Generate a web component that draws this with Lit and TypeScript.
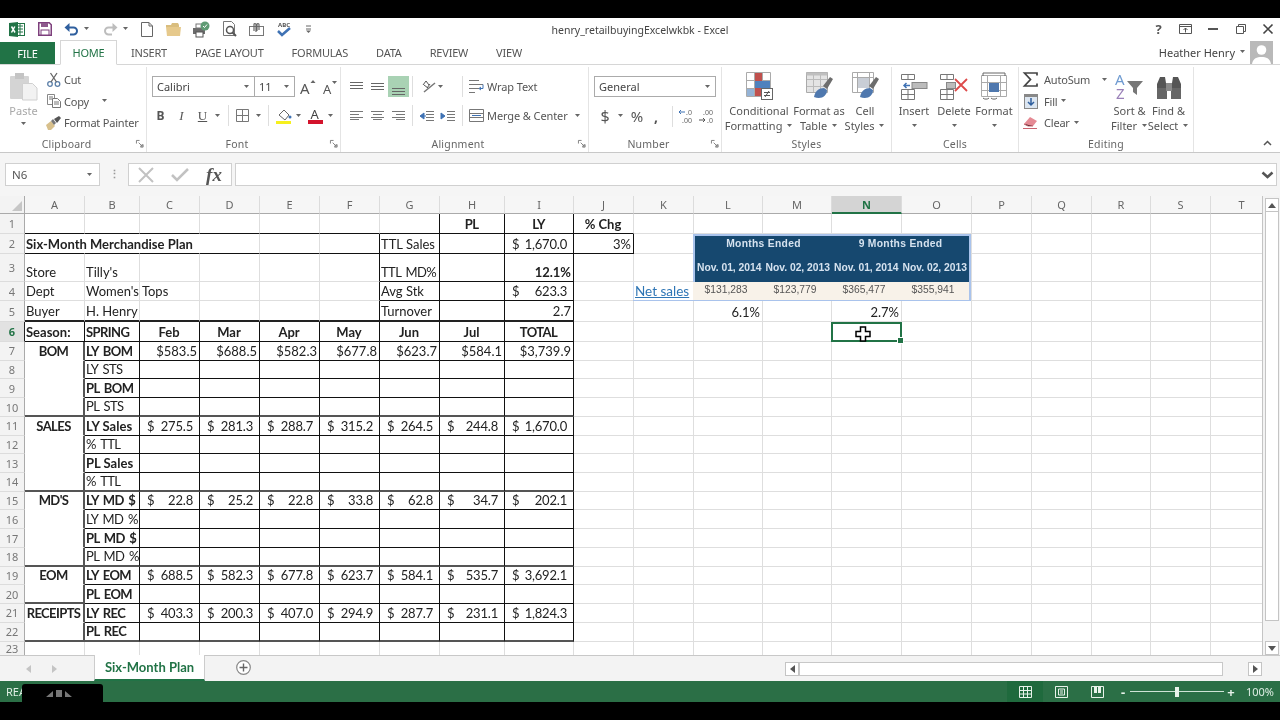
import { LitElement, html, css, nothing } from "lit";
import { customElement } from "lit/decorators.js";

const COLS = "ABCDEFGHIJKLMNOPQRST".split("");

type Cell = { t?: string; money?: string; bold?: boolean; al?: "c" | "r"; sel?: boolean };
const cells: Record<string, Cell> = {
  H1: { t: "PL", bold: true, al: "c" },
  I1: { t: "LY", bold: true, al: "c" },
  J1: { t: "% Chg", bold: true, al: "c" },
  A2: { t: "Six-Month Merchandise Plan", bold: true },
  G2: { t: "TTL Sales" },
  I2: { money: "1,670.0" },
  J2: { t: "3%", al: "r" },
  A3: { t: "Store" },
  B3: { t: "Tilly's" },
  G3: { t: "TTL MD%" },
  I3: { t: "12.1%", bold: true, al: "r" },
  A4: { t: "Dept" },
  B4: { t: "Women's Tops" },
  G4: { t: "Avg Stk" },
  I4: { money: "623.3" },
  A5: { t: "Buyer" },
  B5: { t: "H. Henry" },
  G5: { t: "Turnover" },
  I5: { t: "2.7", al: "r" },
  L5: { t: "6.1%", al: "r" },
  N5: { t: "2.7%", al: "r" },
  A6: { t: "Season:", bold: true },
  B6: { t: "SPRING", bold: true },
};
["Feb", "Mar", "Apr", "May", "Jun", "Jul", "TOTAL"].forEach((m, i) => {
  cells[COLS[i + 2] + "6"] = { t: m, bold: true, al: "c" };
});
["$583.5", "$688.5", "$582.3", "$677.8", "$623.7", "$584.1", "$3,739.9"].forEach((v, i) => {
  cells[COLS[i + 2] + "7"] = { t: v, al: "r" };
});
const sideLabels: [number, string][] = [[7, "BOM"], [11, "SALES"], [15, "MD'S"], [19, "EOM"], [21, "RECEIPTS"]];
sideLabels.forEach(([r, t]) => (cells["A" + r] = { t, bold: true, al: "c" }));
const rowLabels: [number, string, boolean][] = [
  [7, "LY BOM", true], [8, "LY STS", false], [9, "PL BOM", true], [10, "PL STS", false],
  [11, "LY Sales", true], [12, "% TTL", false], [13, "PL Sales", true], [14, "% TTL", false],
  [15, "LY MD $", true], [16, "LY MD %", false], [17, "PL MD $", true], [18, "PL MD %", false],
  [19, "LY EOM", true], [20, "PL EOM", true], [21, "LY REC", true], [22, "PL REC", true],
];
rowLabels.forEach(([r, t, bold]) => (cells["B" + r] = { t, bold }));
const moneyRows: [number, string[]][] = [
  [11, ["275.5", "281.3", "288.7", "315.2", "264.5", "244.8", "1,670.0"]],
  [15, ["22.8", "25.2", "22.8", "33.8", "62.8", "34.7", "202.1"]],
  [19, ["688.5", "582.3", "677.8", "623.7", "584.1", "535.7", "3,692.1"]],
  [21, ["403.3", "200.3", "407.0", "294.9", "287.7", "231.1", "1,824.3"]],
];
moneyRows.forEach(([r, vals]) => vals.forEach((v, i) => (cells[COLS[i + 2] + r] = { money: v })));

// which cell edges carry the dark table rules
function bottomClass(r: number, c: number) {
  if (r === 1 || r === 2) return c <= 9 ? "bb" : "";
  if (r === 3 || r === 4) return c >= 6 && c <= 8 ? "bb" : "";
  if (r === 5) return c <= 8 ? "bb2" : "";
  if (r === 6) return c <= 8 ? "bb" : "";
  if (r >= 7 && r <= 22 && c <= 8) {
    const gray = r === 10 || r === 14 || r === 18 || r === 22;
    if (c === 0) return gray || r === 20 ? "bg2" : "none";
    return gray ? "bg2" : "bb";
  }
  return "";
}
function rightClass(r: number, c: number) {
  if (r === 1) return c >= 6 && c <= 8 ? "rr" : "";
  if (r === 2) {
    if (c <= 2) return "noR";
    return c >= 5 && c <= 9 ? "rr" : "";
  }
  if (r >= 3 && r <= 5) return c >= 5 && c <= 8 ? "rr" : "";
  if (r === 6) return c <= 8 ? "rr" : "";
  if (r >= 7 && r <= 22) {
    if (c === 0) return "rg2";
    return c <= 8 ? "rr" : "";
  }
  return "";
}

const dd = html`<svg class="dd" width="7" height="4" viewBox="0 0 7 4"><path d="M1 0h5L3.500 3z" fill="#666"/></svg>`;
const launcher = html`<svg width="8" height="8" viewBox="0 0 9 9"><path d="M.5 4V.5H4M8 5v3H5M3 3l4 4M7 4.500V7H4.500" fill="none" stroke="#777"/></svg>`;

const I = {
  excel: html`<svg width="16" height="15" viewBox="0 0 16 15"><rect x="6" y="1.500" width="9.500" height="12" fill="#fff" stroke="#217346"/><path d="M9 4h5M9 7h5M9 10h5M11 2v11" stroke="#217346"/><path d="M0 1l9-1v15l-9-1z" fill="#217346"/><path d="M2.500 4.500l3.500 6M5.800 4.500l-3.300 6" stroke="#fff" stroke-width="1.500"/></svg>`,
  save: html`<svg width="14" height="14" viewBox="0 0 14 14"><path d="M.75.75h10.500l2 2v10.500H.75z" fill="none" stroke="#7d3f7c" stroke-width="1.500"/><rect x="3" y="1" width="7" height="4" fill="#8d5a8c"/><rect x="3" y="8" width="8" height="5" fill="#fff" stroke="#7d3f7c"/></svg>`,
  undo: html`<svg width="15" height="14" viewBox="0 0 15 14"><path d="M2 5.500h7.500a3.500 3.500 0 0 1 0 7H6" fill="none" stroke="#2f5f9e" stroke-width="2"/><path d="M5.500 1v9L.5 5.500z" fill="#2f5f9e"/></svg>`,
  redo: html`<svg width="15" height="14" viewBox="0 0 15 14"><path d="M13 5.500H5.500a3.500 3.500 0 0 0 0 7H9" fill="none" stroke="#bdbdbd" stroke-width="2"/><path d="M9.500 1v9l5-4.500z" fill="#bdbdbd"/></svg>`,
  page: html`<svg width="12" height="15" viewBox="0 0 12 15"><path d="M.5.500h7.500l3.500 3.500v10.500H.5zM8 .5v3.500h3.500" fill="#fff" stroke="#666"/></svg>`,
  open: html`<svg width="15" height="13" viewBox="0 0 15 13"><path d="M0 2h5l1-2h6l1 2v2H0z" fill="#d9bd7e"/><path d="M0 4h15l-1 9H1z" fill="#e6c98c"/></svg>`,
  share: html`<svg width="17" height="16" viewBox="0 0 17 16"><rect x="0" y="7" width="12" height="6" fill="#6b6b6b"/><rect x="3" y="11" width="7" height="5" fill="#fff" stroke="#555"/><rect x="3" y="3" width="7" height="4" fill="#fff" stroke="#777"/><circle cx="12" cy="5" r="4.500" fill="#5f9b74"/><path d="M10 5l1.500 1.500L14 3.500" fill="none" stroke="#fff"/></svg>`,
  preview: html`<svg width="14" height="16" viewBox="0 0 14 16"><path d="M.5.500h8l3 3v11H.5z" fill="#fff" stroke="#777"/><circle cx="7" cy="9" r="3.500" fill="#fff" stroke="#555" stroke-width="1.500"/><path d="M9.500 11.500l3.500 3.500" stroke="#555" stroke-width="2"/></svg>`,
  attach: html`<svg width="15" height="13" viewBox="0 0 15 13"><rect x=".5" y="3.500" width="14" height="9" fill="#fff" stroke="#777"/><path d="M5 8V1.500a1 1 0 0 1 2 0V9M8 8V1.500a1 1 0 0 1 2 0V7" fill="none" stroke="#666" stroke-width="1.200"/></svg>`,
  spell: html`<svg width="16" height="18" viewBox="0 0 16 18"><text x="1" y="7" font-family="Noto Sans" font-size="6" font-weight="700" fill="#555">ABC</text><path d="M1 11l4 4 8-7" fill="none" stroke="#3f72b4" stroke-width="2.500"/></svg>`,
  cust: html`<svg width="7" height="8" viewBox="0 0 7 8"><path d="M1 1h5M1 4h5" stroke="#666"/><path d="M1 5.500h5L3.500 8z" fill="#666"/></svg>`,
  avatar: html`<svg width="23" height="23" viewBox="0 0 23 23"><rect width="23" height="23" fill="#b9b9b9"/><circle cx="11.500" cy="9" r="4.800" fill="#fff"/><path d="M2 23c1-6 5-7 9.500-7s8.500 1 9.500 7z" fill="#fff"/></svg>`,
  paste: html`<svg width="28" height="28" viewBox="0 0 28 28"><rect x="0" y="3" width="19" height="23" rx="1" fill="#d4d4d4"/><rect x="5" y="0" width="9" height="6" fill="#c4c4c4"/><path d="M12.500 10.500h10l4.500 4.500v12H12.500z" fill="#f2f2f2" stroke="#d0d0d0"/></svg>`,
  cut: html`<svg width="14" height="14" viewBox="0 0 14 14"><circle cx="3" cy="11" r="2.300" fill="none" stroke="#5b7fa8" stroke-width="1.300"/><circle cx="10.500" cy="11" r="2.300" fill="none" stroke="#5b7fa8" stroke-width="1.300"/><path d="M4 9L10 0M9.500 9L3.500 0" stroke="#666" stroke-width="1.300"/></svg>`,
  copy: html`<svg width="14" height="14" viewBox="0 0 14 14"><path d="M.5.500h7v10h-7z" fill="#fff" stroke="#888"/><path d="M5.500 4.500h5l3 3v6h-8z" fill="#fff" stroke="#777"/><path d="M2 3h4M2 5h3M7 8h5M7 10h5" stroke="#777"/></svg>`,
  painter: html`<svg width="15" height="14" viewBox="0 0 15 14"><path d="M0 9l5-4 4 5-4 4H2z" fill="#d8c08c"/><path d="M5 5l2-2 3 4-2 2z" fill="#777"/><path d="M8 3l5-3 2 2-4 5z" fill="#555"/></svg>`,
  growA: html`<svg width="16" height="18" viewBox="0 0 16 18"><text x="0" y="16" font-family="Noto Sans" font-size="15" fill="#555">A</text><path d="M10.500 5l2.500-3 2.500 3z" fill="#666"/></svg>`,
  shrinkA: html`<svg width="15" height="16" viewBox="0 0 15 16"><text x="0" y="15" font-family="Noto Sans" font-size="13" fill="#555">A</text><path d="M9 2h5l-2.500 3z" fill="#666"/></svg>`,
  borders: html`<svg width="13" height="13" viewBox="0 0 13 13"><path d="M.5.500h12v12H.5zM6.500 1v11M1 6.500h11" fill="none" stroke="#777"/></svg>`,
  fill: html`<svg width="16" height="16" viewBox="0 0 16 16"><path d="M3 7l5-5 5 5-4 5z" fill="#fff" stroke="#666"/><circle cx="14" cy="9" r="1.500" fill="#3f72b4"/><rect x="0" y="13" width="15" height="3" fill="#f6f01e"/></svg>`,
  colorA: html`<svg width="15" height="17" viewBox="0 0 15 17"><text x="2.500" y="12" font-family="Noto Sans" font-size="13" fill="#444">A</text><rect y="13" width="15" height="4" fill="#d3132c"/></svg>`,
  alTop: html`<svg width="13" height="9" viewBox="0 0 13 9"><path d="M0 .5h13M0 3.500h13M0 6.500h13" stroke="#666"/></svg>`,
  alMid: html`<svg width="13" height="7" viewBox="0 0 13 7"><path d="M0 .5h13M0 3.500h13M0 6.500h13" stroke="#666"/></svg>`,
  alBot: html`<svg width="13" height="16" viewBox="0 0 13 16"><path d="M0 9.500h13M0 12.500h13M0 15.500h13" stroke="#666"/></svg>`,
  left: html`<svg width="13" height="9" viewBox="0 0 13 9"><path d="M0 .5h13M0 3.500h9M0 6.500h13M0 8.500h9" stroke="#777"/></svg>`,
  center: html`<svg width="13" height="9" viewBox="0 0 13 9"><path d="M0 .5h13M2 3.500h9M0 6.500h13M2 8.500h9" stroke="#777"/></svg>`,
  right: html`<svg width="13" height="9" viewBox="0 0 13 9"><path d="M0 .5h13M4 3.500h9M0 6.500h13M4 8.500h9" stroke="#777"/></svg>`,
  orient: html`<svg width="14" height="13" viewBox="0 0 14 13"><path d="M2 12L13 3" stroke="#777" stroke-width="1.500"/><path d="M1 5l3-4 3 4M2 5l4 3M5 8l3-4" fill="none" stroke="#555"/></svg>`,
  outdent: html`<svg width="14" height="10" viewBox="0 0 14 10"><path d="M6 .5h8M6 3.500h8M6 6.500h8M6 9.500h8" stroke="#777"/><path d="M4 2L0 5l4 3zM4 5h2" fill="#3f72b4" stroke="#3f72b4"/></svg>`,
  indent: html`<svg width="14" height="10" viewBox="0 0 14 10"><path d="M6 .5h8M6 3.500h8M6 6.500h8M6 9.500h8" stroke="#777"/><path d="M0 2l4 3-4 3zM0 5h2" fill="#3f72b4" stroke="#3f72b4"/></svg>`,
  wrap: html`<svg width="15" height="13" viewBox="0 0 15 13"><path d="M0 .5h10M0 4.500h14M0 8.500h10M0 12.500h6" stroke="#777"/><path d="M14 4.500v4h-3M12 7l-2 1.500 2 1.500" fill="none" stroke="#3f72b4"/></svg>`,
  merge: html`<svg width="15" height="13" viewBox="0 0 15 13"><path d="M.5.500h14v12H.5zM1 4.500h13M1 8.500h13" fill="none" stroke="#777"/><path d="M3 6.500h9" stroke="#3f72b4"/></svg>`,
  decUp: html`<svg width="17" height="18" viewBox="0 0 17 18"><text x="7" y="8" font-family="Noto Sans" font-size="7" fill="#666">.0</text><text x="3" y="15.500" font-family="Noto Sans" font-size="7" fill="#666">.00</text><path d="M0 5h6M2 3L0 5l2 2" fill="none" stroke="#3f72b4"/></svg>`,
  decDn: html`<svg width="17" height="18" viewBox="0 0 17 18"><text x="5" y="8" font-family="Noto Sans" font-size="7" fill="#666">.00</text><text x="9" y="15.500" font-family="Noto Sans" font-size="7" fill="#666">.0</text><path d="M1 13h6M5 11l2 2-2 2" fill="none" stroke="#555"/></svg>`,
  cond: html`<svg width="27" height="28" viewBox="0 0 27 28"><path d="M.5.500h24v24H.5zM8.500 1v23M16.500 1v23M1 8.500h23M1 16.500h23" fill="#fff" stroke="#aaa"/><rect x="9" y="1" width="7" height="8" fill="#c0504d"/><rect x="9" y="9" width="15" height="7" fill="#4f81bd"/><rect x="9" y="16" width="7" height="8" fill="#c0504d"/><rect x="1" y="17" width="7" height="7" fill="#94b3d6"/><rect x="15.500" y="16.500" width="11" height="11" fill="#fff" stroke="#666"/><path d="M18 20.500h6M18 23.500h6M19 25l4-6" stroke="#555"/></svg>`,
  table: html`<svg width="27" height="28" viewBox="0 0 27 28"><path d="M.5.500h21v20H.5z" fill="#e4e4e4" stroke="#aaa"/><path d="M7.500 1v19M14.500 1v19M1 7.500h20M1 14.500h20" stroke="#bbb"/><path d="M.5.500h21v3H.5z" fill="#bfbfbf"/><path d="M17 14l7-9 3 2-6 10z" fill="#6d6d6d"/><path d="M8 25c1-6 5-9 10-9l3 2c0 6-6 10-13 7z" fill="#4f78ae"/></svg>`,
  cellst: html`<svg width="27" height="28" viewBox="0 0 27 28"><path d="M.5.500h21v20H.5zM1 5.500h20M5.500 1v19M17.500 1v19" fill="#fff" stroke="#aaa"/><rect x="6" y="6" width="11" height="10" fill="#c9ced6"/><path d="M17 14l7-9 3 2-6 10z" fill="#6d6d6d"/><path d="M8 25c1-6 5-9 10-9l3 2c0 6-6 10-13 7z" fill="#4f78ae"/></svg>`,
  insert: html`<svg width="27" height="26" viewBox="0 0 27 26"><path d="M.5.500h13v5H.5zM7 1v4M.5 15.500h13v10H.5zM1 20.500h12M7 16v9" fill="none" stroke="#777"/><rect x="11" y="8.500" width="15" height="6" fill="#bcbcbc" stroke="#888"/><path d="M9 11.500H3M5.500 9L3 11.500 5.500 14" fill="none" stroke="#3f72b4" stroke-width="1.500"/></svg>`,
  del: html`<svg width="28" height="26" viewBox="0 0 28 26"><path d="M.5.500h13v5H.5zM7 1v4M.5 15.500h13v10H.5zM1 20.500h12M7 16v9" fill="none" stroke="#777"/><rect x="6.500" y="8.500" width="9" height="6" fill="#bcbcbc" stroke="#888"/><path d="M15 5l12 12M27 5L15 17" stroke="#dd4a4a" stroke-width="1.800"/></svg>`,
  format: html`<svg width="27" height="28" viewBox="0 0 27 28"><path d="M.5 3.500h25v21H.5zM6.500 3v21M19.500 3v21M1 10.500h24M1 18.500h24" fill="#fff" stroke="#aaa"/><rect x="8" y="11" width="10" height="9" fill="#4f78ae"/><path d="M2 1h22M2 1v3M24 1v3M2 26c1 1.500 5 1.500 6 0M10 26c1 1.500 5 1.500 6 0" fill="none" stroke="#666"/></svg>`,
  sigma: html`<svg width="15" height="15" viewBox="0 0 15 15"><path d="M14 3.500V1H1.500l6 6.500-6 6.500H14v-2.500" fill="none" stroke="#444" stroke-width="1.700"/></svg>`,
  fillDown: html`<svg width="14" height="15" viewBox="0 0 14 15"><rect x=".5" y=".5" width="13" height="14" fill="#dce6f1" stroke="#888"/><path d="M1 1h12v2H1z" fill="#888"/><path d="M7 4v7M4 8l3 3 3-3" fill="none" stroke="#2f5f9e" stroke-width="1.500"/></svg>`,
  eraser: html`<svg width="15" height="13" viewBox="0 0 15 13"><path d="M7 1l7 4-4 5H5L1 8z" fill="#e58a94"/><path d="M1 8l4 2h5M0 12.500h14" stroke="#c9626e"/></svg>`,
  sort: html`<svg width="29" height="28" viewBox="0 0 29 28"><text x="0" y="13" font-family="Noto Sans" font-size="15" fill="#6f9bd1">A</text><text x="1" y="27" font-family="Noto Sans" font-size="15" fill="#9a80b8">Z</text><path d="M12 9h16l-6 7v7l-4-3v-4z" fill="#777"/></svg>`,
  find: html`<svg width="26" height="24" viewBox="0 0 26 24"><path d="M4 1h5l1 6v6H1V8zM17 1h5l3 7v5h-9V7z" fill="#555"/><rect x="1" y="12" width="10" height="11" fill="#666"/><rect x="15" y="12" width="10" height="11" fill="#666"/><rect x="10" y="7" width="6" height="8" fill="#8a8a8a"/></svg>`,
  chevron: html`<svg width="9" height="6" viewBox="0 0 9 6"><path d="M1 5l3.500-3.500L8 5" fill="none" stroke="#555" stroke-width="1.500"/></svg>`,
  help: html`<span class="helpq">?</span>`,
  display: html`<svg width="13" height="10" viewBox="0 0 13 10"><path d="M.5.500h12v9H.5zM1 2.500h11" fill="none" stroke="#555"/><path d="M6.500 8.500V4M4.500 6l2-2 2 2" fill="none" stroke="#555"/></svg>`,
  min: html`<svg width="10" height="3" viewBox="0 0 10 3"><rect width="10" height="2" fill="#555"/></svg>`,
  restore: html`<svg width="10" height="10" viewBox="0 0 10 10"><path d="M.5 2.500h7v7h-7zM2.500 2V.5h7v7H8" fill="none" stroke="#555"/></svg>`,
  close: html`<svg width="10" height="10" viewBox="0 0 10 10"><path d="M.5.500l9 9M9.500.5l-9 9" stroke="#444" stroke-width="1.600"/></svg>`,
  cancel: html`<svg width="16" height="16" viewBox="0 0 16 16"><path d="M1 1l14 14M15 1L1 15" stroke="#c2c2c2" stroke-width="2"/></svg>`,
  enter: html`<svg width="18" height="14" viewBox="0 0 18 14"><path d="M1 7l5 5L17 1" fill="none" stroke="#c2c2c2" stroke-width="2.500"/></svg>`,
  expand: html`<svg width="13" height="8" viewBox="0 0 13 8"><path d="M1.500 1.500l5 4.500 5-4.500" fill="none" stroke="#555" stroke-width="2.500"/></svg>`,
  plus: html`<svg width="15" height="15" viewBox="0 0 15 15"><circle cx="7.500" cy="7.500" r="6.800" fill="#fff" stroke="#888" stroke-width="1.200"/><path d="M7.500 3.500v8M3.500 7.500h8" stroke="#666" stroke-width="1.400"/></svg>`,
  normal: html`<svg width="13" height="12" viewBox="0 0 13 12"><path d="M.5.500h12v11H.5zM4.500 1v10M8.500 1v10M1 4.500h11M1 8h11" fill="none" stroke="#e8f2ea"/></svg>`,
  layout: html`<svg width="13" height="12" viewBox="0 0 13 12"><path d="M.5.500h12v11H.5z" fill="none" stroke="#e8f2ea"/><path d="M3.500 3h6v6h-6zM5 5h3M5 7h3" fill="none" stroke="#e8f2ea"/></svg>`,
  breakv: html`<svg width="13" height="12" viewBox="0 0 13 12"><path d="M.5.500h12v11H.5z" fill="none" stroke="#e8f2ea"/><rect x="3" y="1" width="3" height="6" fill="#e8f2ea"/><rect x="7" y="1" width="3" height="6" fill="#e8f2ea"/></svg>`,
  cursor: html`<svg width="16" height="16" viewBox="0 0 16 16"><path d="M5.500 1h5v4.500H15v5h-4.500V15h-5v-4.500H1v-5h4.500z" fill="#fff" stroke="#000" stroke-width="1.500"/></svg>`,
};

@customElement("app-root")
export class AppRoot extends LitElement {
  static styles = css`
    :host {
      display: block;
      width: 1280px;
      height: 720px;
      overflow: hidden;
      background: #000;
    }
    svg { overflow: visible; }
    .app {
      width: 1280px;
      height: 720px;
      display: flex;
      flex-direction: column;
      font-family: "Noto Sans", sans-serif;
      font-size: 11px;
      color: #555;
      filter: blur(0.35px);
    }
    .black { height: 18px; background: #000; flex: none; }

    .titlebar {
      height: 22px;
      flex: none;
      background: #fff;
      display: grid;
      grid-template-columns: 1fr auto 1fr;
      align-items: center;
    }
    .qat { display: flex; align-items: center; padding-left: 9px; gap: 12.500px; }
    .qat .tight { margin-left: -8.500px; display: flex; }
    .doc { font-size: 10.500px; color: #444; padding-top: 1px; }
    .winbtns {
      display: grid;
      grid-template-columns: 27px 27px 27px 30px 24px;
      justify-content: end;
      justify-items: center;
      align-items: center;
    }
    .helpq { font-weight: 700; font-size: 13px; color: #555; }

    .tabs {
      height: 25px;
      flex: none;
      display: flex;
      align-items: stretch;
      background: #fff;
      border-bottom: 1px solid #d6d6d6;
      box-sizing: border-box;
      font-size: 11px;
      letter-spacing: -0.2px;
      color: #555;
    }
    .tab { padding: 0 14px; display: flex; align-items: center; }
    .tab.file {
      width: 55px;
      box-sizing: border-box;
      margin-top: 2px;
      justify-content: center;
      background: #217346;
      color: #fff;
      padding: 0;
    }
    .tab.home {
      margin-left: 5px;
      width: 57px;
      box-sizing: border-box;
      justify-content: center;
      padding: 0;
      color: #217346;
      border: 1px solid #d6d6d6;
      border-bottom: 1px solid #fff;
      margin-bottom: -1px;
      background: #fff;
    }
    .user {
      margin-left: auto;
      display: flex;
      align-items: center;
      gap: 4px;
      padding-right: 7px;
      color: #444;
      letter-spacing: 0;
    }

    .ribbon {
      height: 88px;
      flex: none;
      display: flex;
      background: #fff;
      border-bottom: 1px solid #c8c8c8;
      box-sizing: border-box;
    }
    .group {
      display: flex;
      flex-direction: column;
      box-sizing: border-box;
      border-right: 1px solid #e4e4e4;
      margin-top: 2px;
    }
    .g-clip { width: 147px; }
    .g-font { width: 194px; }
    .g-align { width: 248px; }
    .g-num { width: 133px; }
    .g-styles { width: 170px; }
    .g-cells { width: 127px; }
    .g-edit { width: 175px; }
    .gbody { flex: 1; min-height: 0; }
    .glabel {
      height: 16px;
      flex: none;
      display: grid;
      grid-template-columns: 1fr auto 1fr 13px;
      align-items: center;
      font-size: 10.500px;
      color: #666;
      letter-spacing: 0.2px;
    }
    .glabel.plain { grid-template-columns: 1fr auto 1fr; }
    .glabel .launch { grid-column: 3 / 5; justify-self: end; padding-right: 2px; display: flex; }

    .row { display: grid; align-items: center; justify-items: center; height: 21px; }
    .twoRows { padding-top: 9px; display: flex; flex-direction: column; gap: 8px; }
    .sel-box {
      box-sizing: border-box;
      height: 21px;
      background: #fff;
      border: 1px solid #ababab;
      display: flex;
      align-items: center;
      justify-content: space-between;
      padding: 0 4px;
      width: 100%;
      color: #444;
    }

    .clipBody { display: grid; grid-template-columns: 46px 1fr; }
    .paste {
      display: flex;
      flex-direction: column;
      align-items: center;
      padding-top: 6px;
      padding-left: 1px;
      color: #a8a8a8;
    }
    .paste span { margin-top: 2px; margin-bottom: 4px; line-height: 15px; }
    .small {
      display: flex;
      flex-direction: column;
      padding-top: 2px;
      letter-spacing: -0.2px;
    }
    .small > div {
      display: flex;
      align-items: center;
      height: 21.500px;
      gap: 3px;
      white-space: nowrap;
    }
    .small .mark { width: 15px; display: flex; justify-content: center; flex: none; }
    .small .arrow { margin-left: 9px; display: flex; }
    .small .near { margin-left: -1px; display: flex; }
    .g-edit .small > div { gap: 6px; }
    .g-edit .small .arrow { margin-left: 5px; }
    .g-edit .small .near { margin-left: -3px; }

    .font1 { grid-template-columns: 103px 40px 6px 14px 8px 14px; padding-left: 5px; }
    .font2 {
      grid-template-columns: 21px 21px 21px 9px 6px 1px 5px 16px 4px 8px 6px 1px 7px 16px 2px 8px 5px 16px 3px 8px;
      padding-left: 3px;
      justify-content: start;
    }
    .font2 b, .font2 em, .font2 u { font-family: "Liberation Serif", serif; font-size: 13px; color: #555; }
    .font2 b { font-family: "Noto Sans", sans-serif; font-size: 12px; }
    .vsep { width: 1px; height: 21px; background: #dedede; }
    .sizeBox { border-left: 0; }

    .al1 { grid-template-columns: 21px 21px 21px 3px 1px 9px 14px 8px 18px 1px 6px 15px 3px auto; padding-left: 5px; justify-content: start; }
    .al2 { grid-template-columns: 21px 21px 21px 3px 1px 7px 14px 7px 14px 7px 1px 6px 15px 3px auto 6px 7px; padding-left: 5px; justify-content: start; }
    .alBotBox { background: #a9d2b4; width: 21px; height: 21px; display: flex; align-items: center; justify-content: center; }
    .nowrapText { white-space: nowrap; justify-self: start; letter-spacing: -0.1px; }

    .num1 { padding: 0 5px 0 5px; }
    .num2 { grid-template-columns: 16px 3px 8px 6px 14px 9px 6px 13px 1px 7px 15px 4px 15px; padding-left: 8px; justify-content: start; }
    .dollar { font-size: 16px; color: #555; }
    .pct { font-size: 15px; color: #555; }
    .comma { font-size: 14px; font-weight: 700; color: #555; }

    .bigs { display: grid; height: 100%; }
    .s-bigs { grid-template-columns: 60px 60px 32px; padding-left: 7px; }
    .c-bigs { grid-template-columns: 40px 40px 40px; padding-left: 2px; justify-content: start; }
    .e-bigs { display: grid; grid-template-columns: 87px 39px 39px; padding-left: 4px; }
    .big {
      display: flex;
      flex-direction: column;
      align-items: center;
      text-align: center;
      line-height: 15px;
      color: #555;
      white-space: nowrap;
    }
    .big .ic { height: 33px; flex: none; display: flex; align-items: flex-end; justify-content: center; margin-bottom: 3px; }
    .big .dd { vertical-align: 2px; margin-left: 1px; }
    .collapse { margin-left: auto; align-self: flex-end; padding: 0 8px 6px 0; display: flex; }

    .formula {
      height: 43px;
      flex: none;
      background: #f5f5f5;
      display: flex;
      align-items: flex-start;
      padding-top: 10px;
      box-sizing: border-box;
    }
    .namebox {
      box-sizing: border-box;
      width: 95px;
      height: 23px;
      margin-left: 5px;
      background: #fff;
      border: 1px solid #d0d0d0;
      display: flex;
      align-items: center;
      justify-content: space-between;
      padding: 0 6px;
      font-size: 11.500px;
    }
    .grip { width: 28px; text-align: center; color: #999; line-height: 22px; font-weight: 700; }
    .fbtns {
      box-sizing: border-box;
      width: 104px;
      height: 23px;
      background: #fff;
      border: 1px solid #d0d0d0;
      display: grid;
      grid-template-columns: 34px 34px 34px;
      align-items: center;
      justify-items: center;
    }
    .fx { font-family: "Liberation Serif", serif; font-style: italic; font-size: 19px; color: #555; line-height: 20px; font-weight: 700; }
    .finput {
      box-sizing: border-box;
      flex: 1;
      height: 23px;
      margin: 0 3px 0 3px;
      padding-right: 2px;
      background: #fff;
      border: 1px solid #d0d0d0;
      display: flex;
      align-items: center;
      justify-content: flex-end;
    }

    .sheet { height: 459px; flex: none; display: flex; background: #fff; }
    .gridWrap { width: 1263px; position: relative; overflow: hidden; border-right: 1px solid #c4c4c4; box-sizing: border-box; }
    .grid {
      display: grid;
      grid-template-columns: 25px 60px 55px 60px 60px 60px 60px 60px 65px 69px 60px 60px 69px 69px 70px 70px 60px 60px 59px 60px 62px;
      grid-template-rows: 18px 20px 20px 28px 19px 21px 20px repeat(16, 18.720px) 14px;
      font-family: Lato, sans-serif;
      font-size: 13px;
      color: #222;
    }
    .corner { background: #f3f3f3; border-right: 1px solid #aaa; border-bottom: 1px solid #aaa; box-sizing: border-box; display: flex; align-items: flex-end; justify-content: flex-end; padding: 0 2px 2px 0; }
    .chead {
      background: #f6f6f6;
      border-right: 1px solid #dcdcdc;
      border-bottom: 1px solid #aaa;
      box-sizing: border-box;
      display: flex;
      align-items: center;
      justify-content: center;
      font-family: "Noto Sans", sans-serif;
      font-size: 11px;
      color: #666;
    }
    .chead.on { background: #d4d4d4; color: #217346; font-weight: 700; border-bottom: 2px solid #217346; }
    .rhead {
      background: #f3f3f3;
      border-right: 1px solid #aaa;
      border-bottom: 1px solid #dcdcdc;
      box-sizing: border-box;
      display: flex;
      align-items: center;
      justify-content: center;
      font-family: "Noto Sans", sans-serif;
      font-size: 11px;
      color: #777;
    }
    .rhead.on { color: #217346; font-weight: 700; background: #e2e2e2; border-right: 1px solid #222; }
    .c {
      box-sizing: border-box;
      border-right: 1px solid #dedede;
      border-bottom: 1px solid #dedede;
      display: flex;
      align-items: flex-end;
      padding: 0 2px 0 1px;
      white-space: nowrap;
      line-height: 17px;
      min-width: 0;
    }
    .c.center { justify-content: center; }
    .c.end { justify-content: flex-end; }
    .c.money { justify-content: space-between; padding: 0 6px 0 7px; }
    .c.money span + span { letter-spacing: -0.2px; }
    .c.caps { letter-spacing: -0.6px; word-spacing: 2px; }
    .c.bold { font-weight: 700; }
    .c.bb { border-bottom: 1px solid #111; }
    .c.bb2 { border-bottom: 2px solid #222; }
    .c.bg2 { border-bottom: 2px solid #555; }
    .c.none { border-bottom: 1px solid #fff; }
    .c.rr { border-right: 1px solid #111; }
    .c.rg2 { border-right: 2px solid #555; }
    .c.noR { border-right: 1px solid transparent; }

    .pasted {
      position: absolute;
      left: 633px;
      top: 38px;
      width: 338px;
      display: flex;
      flex-direction: column;
      align-items: flex-end;
      font-family: "Liberation Sans", sans-serif;
    }
    .phead {
      box-sizing: border-box;
      width: 278px;
      height: 48px;
      background: #16486f;
      border: 2px solid #a9c3ec;
      border-bottom: 0;
      color: #d5e2ef;
      font-weight: 700;
      font-size: 10.300px;
      display: grid;
      grid-template-columns: repeat(4, 1fr);
      grid-template-rows: 14px 34px;
      align-items: center;
      justify-items: center;
      white-space: nowrap;
    }
    .phead .span2 { grid-column: span 2; letter-spacing: 0.3px; }
    .pdata {
      box-sizing: border-box;
      width: 338px;
      height: 19px;
      display: grid;
      grid-template-columns: 60px repeat(4, 1fr);
      border-bottom: 2px solid #a9c3ec;
      border-right: 2px solid #a9c3ec;
      font-size: 10.300px;
      color: #555;
    }
    .pdata .v { background: #f8f2e9; display: flex; justify-content: center; align-items: flex-start; padding-top: 2px; padding-right: 3px; }
    .pdata .lnk {
      font-family: Lato, sans-serif;
      font-size: 13.500px;
      color: #2e75b5;
      text-decoration: underline;
      background: #fff;
      padding: 1px 0 0 1px;
      line-height: 17px;
      border-left: 1px solid #cfdcf2;
      box-sizing: border-box;
      margin-left: 0;
      white-space: nowrap;
    }
    .picked {
      position: absolute;
      left: 831px;
      top: 126px;
      width: 71px;
      height: 20px;
      box-sizing: border-box;
      border: 2px solid #217346;
    }
    .picked i {
      position: absolute;
      right: -4px;
      bottom: -4px;
      width: 5px;
      height: 5px;
      background: #217346;
      border: 1px solid #fff;
    }
    .pointer { position: absolute; left: 855px; top: 130px; display: flex; }

    .vscroll {
      width: 17px;
      flex: none;
      background: #f3f3f3;
      display: flex;
      flex-direction: column;
      align-items: center;
      box-sizing: border-box;
      padding-top: 2px;
    }
    .vbtn {
      width: 14px;
      height: 14px;
      background: #fff;
      border: 1px solid #c4c4c4;
      box-sizing: border-box;
      display: flex;
      align-items: center;
      justify-content: center;
      flex: none;
    }
    .vthumb { flex: 1; width: 14px; background: #fff; border: 1px solid #c4c4c4; border-top: 0; box-sizing: border-box; margin-bottom: 20px; }

    .sheetbar {
      height: 26px;
      flex: none;
      background: #f3f3f3;
      border-top: 1px solid #c8c8c8;
      box-sizing: border-box;
      display: flex;
      align-items: stretch;
    }
    .navs { width: 94px; display: grid; grid-template-columns: 26px 26px; justify-content: center; justify-items: center; align-items: center; padding-right: 12px; box-sizing: border-box; color: #bbb; }
    .stab {
      width: 111px;
      box-sizing: border-box;
      background: #fff;
      border-right: 1px solid #ccc;
      border-left: 1px solid #ccc;
      border-bottom: 2px solid #217346;
      margin-top: -1px;
      font-family: Lato, sans-serif;
      font-weight: 700;
      font-size: 13px;
      color: #217346;
      display: flex;
      align-items: center;
      justify-content: center;
    }
    .addsheet { width: 76px; display: flex; align-items: center; justify-content: center; padding-bottom: 2px; box-sizing: border-box; }
    .hscroll { margin-left: auto; display: flex; align-items: center; padding-right: 18px; }
    .hbtn {
      width: 14px;
      height: 14px;
      background: #fff;
      border: 1px solid #c4c4c4;
      box-sizing: border-box;
      display: flex;
      align-items: center;
      justify-content: center;
    }
    .hthumb { width: 424px; height: 14px; background: #fff; border: 1px solid #c8c8c8; box-sizing: border-box; margin-right: 25px; }

    .status {
      height: 21px;
      flex: none;
      background: #2b6f46;
      position: relative;
      color: #dfeee4;
      display: flex;
      align-items: center;
      font-size: 11px;
    }
    .ready { padding-left: 6px; width: 16px; overflow: hidden; }
    .mask {
      position: absolute;
      left: 22px;
      top: 3px;
      width: 81px;
      height: 18px;
      background: #000;
      border-radius: 3px 3px 0 0;
      display: flex;
      justify-content: center;
      align-items: center;
      padding-right: 6px;
      box-sizing: border-box;
    }
    .views { margin-left: auto; display: grid; grid-template-columns: 36px 36px 36px; justify-items: center; align-items: center; height: 21px; }
    .views .now { background: #1f6a3d; width: 36px; height: 21px; display: flex; align-items: center; justify-content: center; }
    .zoom { display: flex; align-items: center; margin-left: 3px; }
    .zsign { font-weight: 700; font-size: 13px; width: 10px; text-align: center; color: #e8f2ea; }
    .track { width: 94px; height: 1px; background: #cfe3d6; margin: 0 2px; display: flex; justify-content: center; align-items: center; }
    .track i { width: 4px; height: 10px; background: #e8f2ea; }
    .pctz { width: 44px; text-align: right; padding-right: 6px; box-sizing: border-box; }
  `;

  renderGrid() {
    const rows = [];
    rows.push(html`<div class="corner"><svg width="10" height="10" viewBox="0 0 10 10"><path d="M10 0v10H0z" fill="#c6c6c6"/></svg></div>`);
    for (const col of COLS) rows.push(html`<div class="chead ${col === "N" ? "on" : ""}">${col}</div>`);
    for (let r = 1; r <= 23; r++) {
      rows.push(html`<div class="rhead ${r === 6 ? "on" : ""}">${r}</div>`);
      COLS.forEach((col, c) => {
        const d = cells[col + r];
        const cls = ["c", bottomClass(r, c), rightClass(r, c)];
        if (d?.bold) cls.push("bold");
        if (d?.al === "c") cls.push("center");
        if (d?.al === "r") cls.push("end");
        if (d?.money) cls.push("money");
        // Lato capitals run wider than the sheet's font
        if (d?.t && d.t === d.t.toUpperCase() && /[A-Z]/.test(d.t)) cls.push("caps");
        rows.push(html`<div class=${cls.join(" ")}>${d?.money ? html`<span>$</span><span>${d.money}</span>` : d?.t ?? nothing}</div>`);
      });
    }
    return rows;
  }

  render() {
    return html`
      <div class="app">
        <div class="black"></div>
        <div class="titlebar">
          <div class="qat">
            ${I.excel}${I.save}${I.undo}<span class="tight">${dd}</span>${I.redo}<span class="tight">${dd}</span>
            ${I.page}${I.open}${I.share}${I.preview}${I.attach}${I.spell}${I.cust}
          </div>
          <div class="doc">henry_retailbuyingExcelwkbk - Excel</div>
          <div class="winbtns">${I.help}${I.display}${I.min}${I.restore}${I.close}</div>
        </div>

        <div class="tabs">
          <div class="tab file">FILE</div>
          <div class="tab home">HOME</div>
          <div class="tab">INSERT</div>
          <div class="tab">PAGE LAYOUT</div>
          <div class="tab">FORMULAS</div>
          <div class="tab">DATA</div>
          <div class="tab">REVIEW</div>
          <div class="tab">VIEW</div>
          <div class="user">Heather Henry ${dd} ${I.avatar}</div>
        </div>

        <div class="ribbon">
          <div class="group g-clip">
            <div class="gbody clipBody">
              <div class="paste">${I.paste}<span>Paste</span>${dd}</div>
              <div class="small">
                <div><span class="mark">${I.cut}</span>Cut</div>
                <div><span class="mark">${I.copy}</span>Copy<span class="arrow">${dd}</span></div>
                <div><span class="mark">${I.painter}</span>Format Painter</div>
              </div>
            </div>
            <div class="glabel"><span></span>Clipboard<span class="launch">${launcher}</span></div>
          </div>

          <div class="group g-font">
            <div class="gbody twoRows">
              <div class="row font1">
                <div class="sel-box">Calibri ${dd}</div>
                <div class="sel-box sizeBox">11 ${dd}</div>
                <i></i>${I.growA}<i></i>${I.shrinkA}
              </div>
              <div class="row font2">
                <b>B</b><em>I</em><u>U</u>${dd}<i></i><div class="vsep"></div><i></i>${I.borders}<i></i>${dd}<i></i><div class="vsep"></div><i></i>${I.fill}<i></i>${dd}<i></i>${I.colorA}<i></i>${dd}
              </div>
            </div>
            <div class="glabel"><span></span>Font<span class="launch">${launcher}</span></div>
          </div>

          <div class="group g-align">
            <div class="gbody twoRows">
              <div class="row al1">
                ${I.alTop}${I.alMid}<div class="alBotBox">${I.alBot}</div><i></i><div class="vsep"></div><i></i>${I.orient}${dd}<i></i><div class="vsep"></div><i></i>${I.wrap}<i></i><span class="nowrapText">Wrap Text</span>
              </div>
              <div class="row al2">
                ${I.left}${I.center}${I.right}<i></i><div class="vsep"></div><i></i>${I.outdent}<i></i>${I.indent}<i></i><div class="vsep"></div><i></i>${I.merge}<i></i><span class="nowrapText">Merge &amp; Center</span><i></i>${dd}
              </div>
            </div>
            <div class="glabel"><span></span>Alignment<span class="launch">${launcher}</span></div>
          </div>

          <div class="group g-num">
            <div class="gbody twoRows">
              <div class="num1"><div class="sel-box">General ${dd}</div></div>
              <div class="row num2">
                <span class="dollar">$</span><i></i>${dd}<i></i><span class="pct">%</span><i></i><span class="comma">,</span><i></i><div class="vsep"></div><i></i>${I.decUp}<i></i>${I.decDn}
              </div>
            </div>
            <div class="glabel"><span></span>Number<span class="launch">${launcher}</span></div>
          </div>

          <div class="group g-styles">
            <div class="gbody bigs s-bigs">
              <div class="big"><div class="ic">${I.cond}</div><div>Conditional<br />Formatting ${dd}</div></div>
              <div class="big"><div class="ic">${I.table}</div><div>Format as<br />Table ${dd}</div></div>
              <div class="big"><div class="ic">${I.cellst}</div><div>Cell<br />Styles ${dd}</div></div>
            </div>
            <div class="glabel plain"><span></span>Styles<span></span></div>
          </div>

          <div class="group g-cells">
            <div class="gbody bigs c-bigs">
              <div class="big"><div class="ic">${I.insert}</div><div>Insert<br />${dd}</div></div>
              <div class="big"><div class="ic">${I.del}</div><div>Delete<br />${dd}</div></div>
              <div class="big"><div class="ic">${I.format}</div><div>Format<br />${dd}</div></div>
            </div>
            <div class="glabel plain"><span></span>Cells<span></span></div>
          </div>

          <div class="group g-edit">
            <div class="gbody e-bigs">
              <div class="small">
                <div><span class="mark">${I.sigma}</span>AutoSum<span class="arrow">${dd}</span></div>
                <div><span class="mark">${I.fillDown}</span>Fill<span class="near">${dd}</span></div>
                <div><span class="mark">${I.eraser}</span>Clear<span class="near">${dd}</span></div>
              </div>
              <div class="big"><div class="ic">${I.sort}</div><div>Sort &amp;<br />Filter ${dd}</div></div>
              <div class="big"><div class="ic">${I.find}</div><div>Find &amp;<br />Select ${dd}</div></div>
            </div>
            <div class="glabel plain"><span></span>Editing<span></span></div>
          </div>
          <div class="collapse">${I.chevron}</div>
        </div>

        <div class="formula">
          <div class="namebox">N6 ${dd}</div>
          <div class="grip">⋮</div>
          <div class="fbtns">${I.cancel}${I.enter}<span class="fx">fx</span></div>
          <div class="finput">${I.expand}</div>
        </div>

        <div class="sheet">
          <div class="gridWrap">
            <div class="grid">${this.renderGrid()}</div>
            <div class="pasted">
              <div class="phead">
                <span class="span2">Months Ended</span><span class="span2">9 Months Ended</span>
                <span>Nov. 01, 2014</span><span>Nov. 02, 2013</span><span>Nov. 01, 2014</span><span>Nov. 02, 2013</span>
              </div>
              <div class="pdata">
                <span class="lnk">Net sales</span>
                <span class="v">$131,283</span><span class="v">$123,779</span><span class="v">$365,477</span><span class="v">$355,941</span>
              </div>
            </div>
            <div class="picked"><i></i></div>
            <div class="pointer">${I.cursor}</div>
          </div>
          <div class="vscroll">
            <div class="vbtn"><svg width="8" height="5" viewBox="0 0 8 5"><path d="M0 5l4-5 4 5z" fill="#555"/></svg></div>
            <div class="vthumb"></div>
            <div class="vbtn"><svg width="8" height="5" viewBox="0 0 8 5"><path d="M0 0l4 5 4-5z" fill="#555"/></svg></div>
          </div>
        </div>

        <div class="sheetbar">
          <div class="navs">
            <svg width="5" height="8" viewBox="0 0 5 8"><path d="M5 0L0 4l5 4z" fill="#c4c4c4"/></svg>
            <svg width="5" height="8" viewBox="0 0 5 8"><path d="M0 0l5 4-5 4z" fill="#c4c4c4"/></svg>
          </div>
          <div class="stab">Six-Month Plan</div>
          <div class="addsheet">${I.plus}</div>
          <div class="hscroll">
            <div class="hbtn"><svg width="5" height="8" viewBox="0 0 5 8"><path d="M5 0L0 4l5 4z" fill="#555"/></svg></div>
            <div class="hthumb"></div>
            <div class="hbtn"><svg width="5" height="8" viewBox="0 0 5 8"><path d="M0 0l5 4-5 4z" fill="#555"/></svg></div>
          </div>
        </div>

        <div class="status">
          <div class="ready">READY</div>
          <div class="mask">
            <svg width="28" height="8" viewBox="0 0 28 8"><path d="M0 8l7-6v6zM10 1h6v7h-6zM19 2l7 6h-7z" fill="#777"/></svg>
          </div>
          <div class="views">
            <div class="now">${I.normal}</div>${I.layout}${I.breakv}
          </div>
          <div class="zoom">
            <span class="zsign">-</span>
            <div class="track"><i></i></div>
            <span class="zsign">+</span>
            <span class="pctz">100%</span>
          </div>
        </div>
        <div class="black"></div>
      </div>
    `;
  }
}
